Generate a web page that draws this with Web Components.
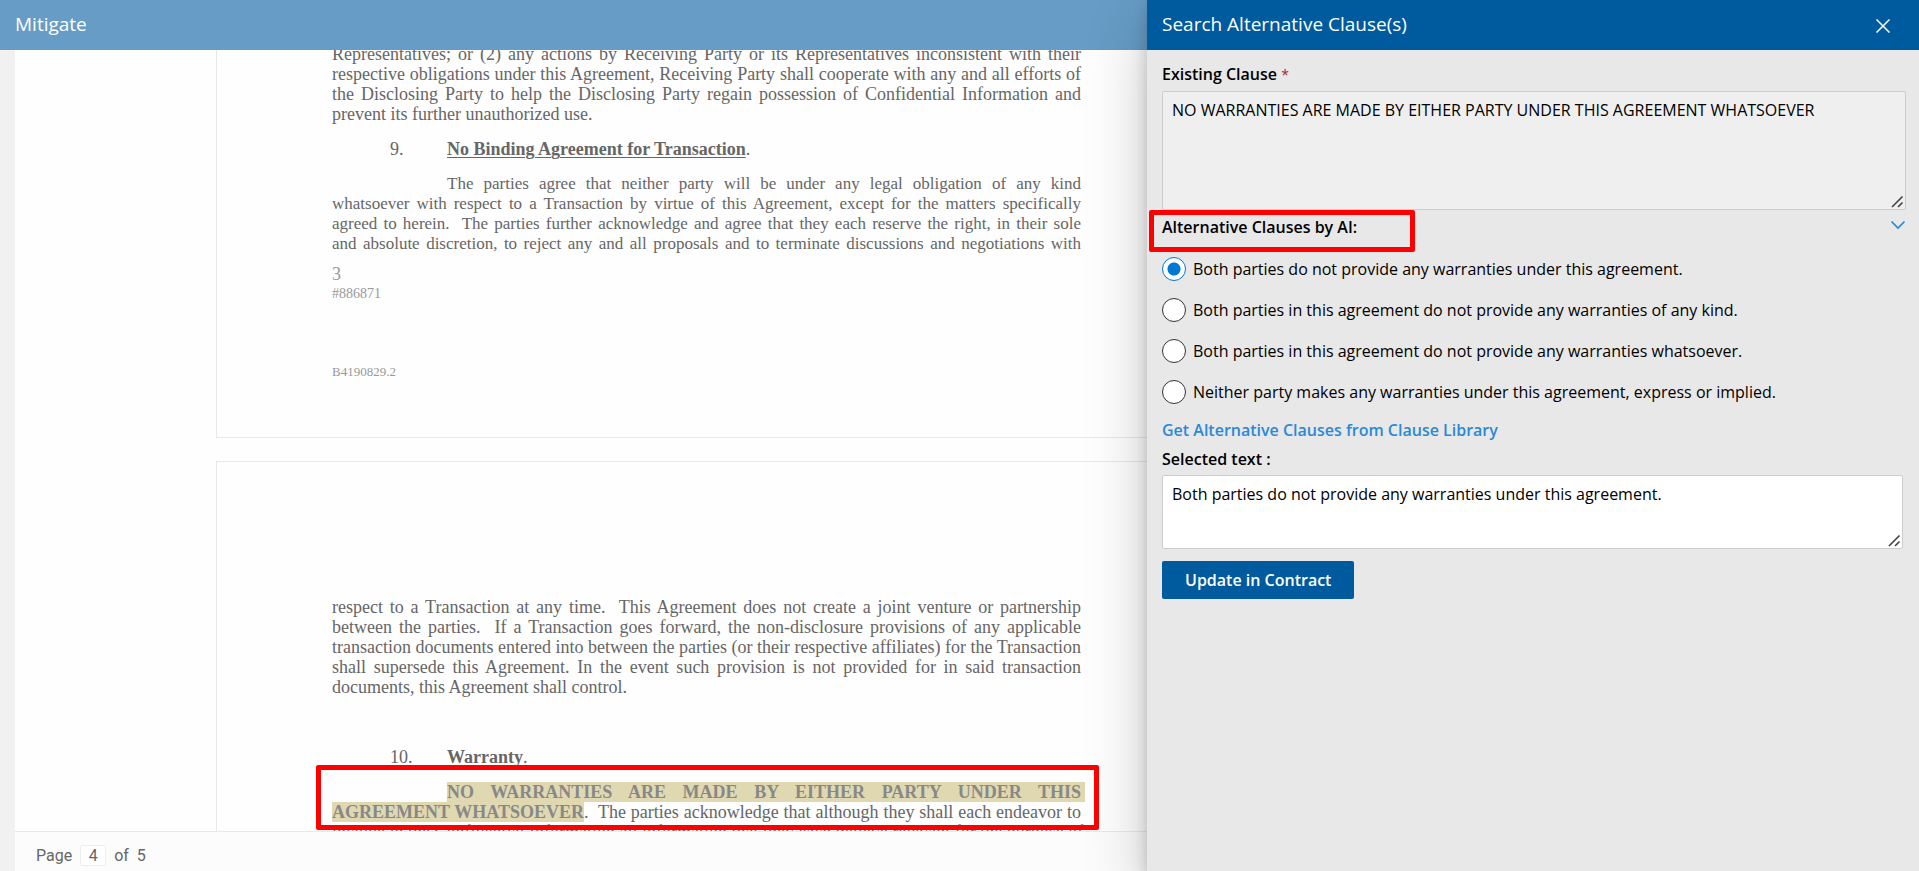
<!DOCTYPE html>
<html lang="en">
<head>
<meta charset="utf-8">
<title>Mitigate</title>
<style>
  html, body { height: 100%; margin: 0; }
  body { font: 16px/20px "Open Sans", "Noto Sans", sans-serif; color: #000; background: #fff; overflow: hidden; }
</style>
</head>
<body>
<mitigate-app></mitigate-app>

<template id="t-app">
  <style>
    :host { display: grid; grid-template-columns: minmax(0, 1147fr) minmax(0, 772fr); height: 100%; }
    main { display: flex; flex-direction: column; min-width: 0; min-height: 0; overflow: hidden; background: #f1f1f1; }
    doc-viewer { flex: 1; min-height: 0; margin-left: 15px; }
    clause-panel { position: relative; }
  </style>
  <main>
    <title-bar tone="dimmed">Mitigate</title-bar>
    <doc-viewer></doc-viewer>
  </main>
  <clause-panel></clause-panel>
</template>

<template id="t-bar">
  <style>
    :host { display: flex; align-items: center; justify-content: space-between; height: 50px; padding: 0 28px 0 15px; box-sizing: border-box; background: #005a9e; color: #fff; flex: none; }
    :host([tone="dimmed"]) { background: #669cc5; }
    h1 { margin: 0; padding-bottom: 2px; font-size: 19px; font-weight: 400; line-height: 24px; }
  </style>
  <h1><slot></slot></h1>
  <slot name="action"></slot>
</template>

<template id="t-viewer">
  <style>
    :host { display: flex; flex-direction: column; background: #fefefe; }
    .scroll { flex: 1; min-height: 0; overflow: hidden; }
    doc-page + doc-page { margin-top: 23px; }
    .first { margin-top: -120px; }
    .gap-m { margin-top: 15px; }
    .note { color: #999; margin: 10px 0 0; }
    .note span { display: block; }
    .small { font-size: 14px; }
    .code { font-size: 13px; color: #999; margin: 58px 0 0; }
    .spaced { margin-top: 50px; }
  </style>
  <div class="scroll">
    <doc-page class="first">
      <doc-para>
        <doc-line>Representatives; or (2) any actions by Receiving Party or its Representatives inconsistent with their</doc-line>
        <doc-line>respective obligations under this Agreement, Receiving Party shall cooperate with any and all efforts of</doc-line>
        <doc-line>the Disclosing Party to help the Disclosing Party regain possession of Confidential Information and</doc-line>
        <doc-line last>prevent its further unauthorized use.</doc-line>
      </doc-para>
      <doc-heading class="gap-m" number="9." underlined>No Binding Agreement for Transaction</doc-heading>
      <doc-para class="gap-m" dense>
        <doc-line indent>The parties agree that neither party will be under any legal obligation of any kind</doc-line>
        <doc-line>whatsoever with respect to a Transaction by virtue of this Agreement, except for the matters specifically</doc-line>
        <doc-line>agreed to herein.&nbsp; The parties further acknowledge and agree that they each reserve the right, in their sole</doc-line>
        <doc-line>and absolute discretion, to reject any and all proposals and to terminate discussions and negotiations with</doc-line>
      </doc-para>
      <p class="note"><span>3</span><span class="small">#886871</span></p>
      <p class="code">B4190829.2</p>
    </doc-page>
    <doc-page>
      <doc-para>
        <doc-line>respect to a Transaction at any time.&nbsp; This Agreement does not create a joint venture or partnership</doc-line>
        <doc-line>between the parties.&nbsp; If a Transaction goes forward, the non-disclosure provisions of any applicable</doc-line>
        <doc-line>transaction documents entered into between the parties (or their respective affiliates) for the Transaction</doc-line>
        <doc-line>shall supersede this Agreement. In the event such provision is not provided for in said transaction</doc-line>
        <doc-line last>documents, this Agreement shall control.</doc-line>
      </doc-para>
      <doc-heading class="spaced" number="10.">Warranty</doc-heading>
      <doc-para class="gap-m" outlined>
        <doc-line indent marked>NO WARRANTIES ARE MADE BY EITHER PARTY UNDER THIS</doc-line>
        <doc-line><doc-mark>AGREEMENT WHATSOEVER</doc-mark>.&nbsp; The parties acknowledge that although they shall each endeavor to</doc-line>
        <doc-line>include in the Confidential Information all information that they each believe relevant for the purpose of</doc-line>
      </doc-para>
    </doc-page>
  </div>
  <page-footer></page-footer>
</template>

<template id="t-page">
  <style>
    :host { display: block; box-sizing: border-box; width: 981px; margin-left: 201px; padding: 135px 115px 55px; border: 1px solid #e8e8e8; background: #fefefe; font: 18px/20px "Liberation Serif", "Times New Roman", serif; color: #666; }
    :host(.first) { padding-top: 113px; }
  </style>
  <slot></slot>
</template>

<template id="t-para">
  <style>
    :host { display: block; position: relative; }
    :host([dense]) { font-size: 17px; }
    :host([outlined])::after { content: ""; position: absolute; left: -16px; right: -18px; top: -17px; height: 65px; box-sizing: border-box; border: 5px solid #f00; border-radius: 2px; }
  </style>
  <slot></slot>
</template>

<template id="t-line">
  <style>
    :host { display: block; white-space: nowrap; text-align: justify; text-align-last: justify; }
    :host([last]) { text-align-last: left; }
    :host([indent]) { margin-left: 115px; }
    :host([marked]) { background: #e0d8b0; color: #888; font-weight: 700; padding-right: 4px; margin-right: -4px; }
  </style>
  <slot></slot>
</template>

<template id="t-mark"><style>:host { background: #e0d8b0; color: #888; font-weight: 700; }</style><slot></slot></template>

<template id="t-heading">
  <style>
    :host { display: flex; padding-left: 58px; }
    .num { width: 57px; }
    h2 { margin: 0; font: inherit; }
    b { font-weight: 700; }
    :host([underlined]) b { text-decoration: underline; text-decoration-thickness: 1px; text-underline-offset: 2px; }
  </style>
  <span class="num"></span><h2><b><slot></slot></b>.</h2>
</template>

<template id="t-footer">
  <style>
    :host { display: flex; align-items: center; gap: 8px; height: 40px; padding: 8px 21px 0; box-sizing: border-box; border-top: 1px solid #eaeaea; background: #fcfcfc; font: 16px/20px Roboto, sans-serif; color: #666; }
    label { display: flex; align-items: center; gap: 8px; }
    input { width: 26px; height: 21px; box-sizing: border-box; padding: 0; border: 1px solid #eee; border-radius: 2px; background: #fff; font: inherit; color: inherit; text-align: center; }
    span { white-space: pre; }
  </style>
  <label>Page <input type="text" value="4"></label><span>of  5</span>
</template>

<template id="t-panel">
  <style>
    :host { display: flex; flex-direction: column; background: #e8e8e8; box-shadow: 0 26px 58px rgba(0,0,0,.22), 0 5px 14px rgba(0,0,0,.18); }
    .close { border: 0; padding: 0; background: none; color: #fff; width: 24px; height: 24px; margin-right: -4px; display: flex; align-items: center; justify-content: center; }
    .body { padding: 14px 13px 0 15px; display: flex; flex-direction: column; align-items: stretch; }
    label, h2 { font-size: 16px; line-height: 20px; font-weight: 600; margin: 0; }
    .req { color: #a4262c; font-weight: 400; font-size: 14px; }
    textarea { display: block; box-sizing: border-box; width: 100%; margin: 6px 0 0; padding: 8px 9px; border: 1px solid #ccc; border-radius: 2px; font: inherit; color: #000; resize: both; }
    textarea::-webkit-resizer { background: url("data:image/svg+xml,%3Csvg xmlns='http://www.w3.org/2000/svg' width='15' height='15' fill='none' stroke='%23444' stroke-width='1.600'%3E%3Cpath d='M2 13L12.500 2.500M8 13l4.500-4.500'/%3E%3C/svg%3E") no-repeat; }
    #existing { height: 119px; background: #efefef; }
    #selected { height: 74px; background: #fff; }
    .selected { margin-right: 3px; }
    .head { position: relative; display: flex; justify-content: space-between; align-items: flex-start; margin-top: 7px; }
    .head::after { content: ""; position: absolute; left: -13px; top: -7px; width: 266px; height: 42px; box-sizing: border-box; border: 5px solid #f00; border-radius: 2px; }
    .toggle { border: 0; padding: 0; background: none; color: #2b88d8; width: 16px; height: 16px; display: flex; align-items: center; justify-content: center; }
    .options { display: flex; flex-direction: column; gap: 17px; margin: 20px 0 16px; }
    a { align-self: flex-start; color: #2b88d8; font-weight: 600; text-decoration: none; margin-bottom: 9px; }
    .update { align-self: flex-start; margin-top: 12px; height: 38px; padding: 0 23px; border: 0; border-radius: 2px; background: #005a9e; color: #fff; font: inherit; font-weight: 600; }
  </style>
  <title-bar>Search Alternative Clause(s)
    <button class="close" slot="action" type="button" aria-label="Close">
      <svg width="16" height="16" viewBox="0 0 16 16" fill="none" stroke="currentColor" stroke-width="1.5"><path d="M1.5 2.5l13 13M14.5 2.5l-13 13"/></svg>
    </button>
  </title-bar>
  <div class="body">
    <label for="existing">Existing Clause <span class="req">*</span></label>
    <textarea id="existing" readonly>NO WARRANTIES ARE MADE BY EITHER PARTY UNDER THIS AGREEMENT WHATSOEVER</textarea>
    <div class="head">
      <h2>Alternative Clauses by AI:</h2>
      <button class="toggle" type="button" aria-label="Collapse">
        <svg width="16" height="16" viewBox="0 0 16 16" fill="none" stroke="currentColor" stroke-width="1.7"><path d="M1.5 4.5L8 11l6.500-6.500"/></svg>
      </button>
    </div>
    <clause-options class="options"></clause-options>
    <a href="#library">Get Alternative Clauses from Clause Library</a>
    <div class="selected">
      <label for="selected">Selected text :</label>
      <textarea id="selected">Both parties do not provide any warranties under this agreement.</textarea>
    </div>
    <button class="update" type="button">Update in Contract</button>
  </div>
</template>

<template id="t-options">
  <style>
    label { display: flex; align-items: center; gap: 7px; line-height: 24px; }
    input { appearance: none; flex: none; width: 24px; height: 24px; margin: 0; box-sizing: border-box; border: 1px solid #333; border-radius: 50%; background: #fff; }
    input:checked { border-color: #0078d4; background: radial-gradient(circle, #0078d4 0 6px, #fff 7px); }
  </style>
  <label><input type="radio" name="clause" checked>Both parties do not provide any warranties under this agreement.</label>
  <label><input type="radio" name="clause">Both parties in this agreement do not provide any warranties of any kind.</label>
  <label><input type="radio" name="clause">Both parties in this agreement do not provide any warranties whatsoever.</label>
  <label><input type="radio" name="clause">Neither party makes any warranties under this agreement, express or implied.</label>
</template>

<script>
  class Templated extends HTMLElement {
    constructor() {
      super();
      const root = this.attachShadow({ mode: 'open' });
      root.append(document.getElementById(this.constructor.template).content.cloneNode(true));
    }
  }
  const define = (name, template) =>
    customElements.define(name, class extends Templated { static template = template; });

  define('doc-mark', 't-mark');
  define('doc-line', 't-line');
  define('doc-para', 't-para');
  define('doc-page', 't-page');
  customElements.define('doc-heading', class extends Templated {
    static template = 't-heading';
    connectedCallback() {
      this.shadowRoot.querySelector('.num').textContent = this.getAttribute('number');
    }
  });
  define('page-footer', 't-footer');
  define('title-bar', 't-bar');
  define('clause-options', 't-options');
  define('doc-viewer', 't-viewer');
  define('clause-panel', 't-panel');
  define('mitigate-app', 't-app');
</script>
</body>
</html>
